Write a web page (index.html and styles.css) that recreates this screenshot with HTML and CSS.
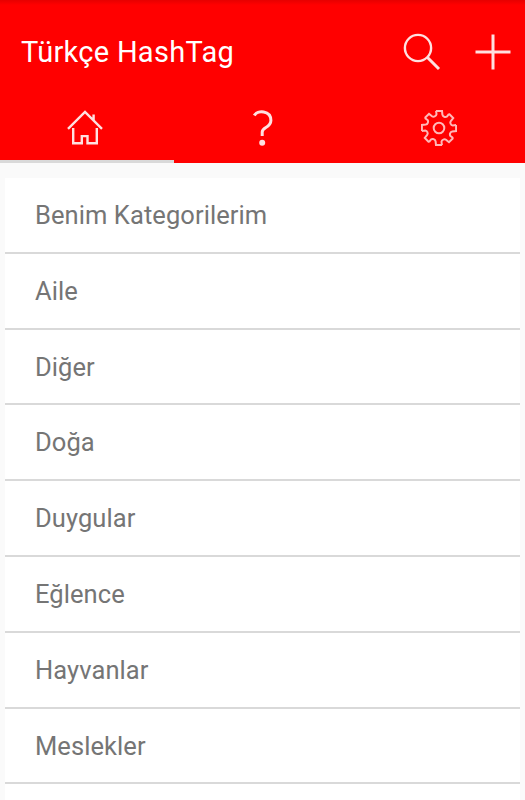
FILE: index.html
```html
<!DOCTYPE html>
<html lang="tr">
<head>
<meta charset="utf-8">
<title>Türkçe HashTag</title>
<link rel="stylesheet" href="styles.css">
</head>
<body>
<header class="header">
  <div class="toolbar">
    <h1 class="title">Türkçe HashTag</h1>
    <svg class="search" viewBox="0 0 38 38"><circle cx="15" cy="15" r="13.1"/><path d="M24.5 24.5L36 36"/></svg>
    <svg class="add" viewBox="0 0 36 36"><path d="M18 .5v35M.5 18h35"/></svg>
  </div>
  <nav class="tabs">
    <a class="tab active"><svg class="home" viewBox="0 0 36 36"><path d="M1 18.8L18 2l17 16.8M26.6 10V4.5M6.2 18v15.2h8.6v-7.1h5.7v7.1h9.3V18"/></svg></a>
    <a class="tab"><svg class="help" viewBox="0 0 36 36"><path d="M10.3 5.5C13-.2 27-.1 26.9 10.6 26.8 18 18.2 17 18.2 22v4"/><circle cx="18.2" cy="32.7" r="3"/></svg></a>
    <a class="tab"><svg class="settings" viewBox="-18 -18 36 36"><defs><path id="tooth" d="M-3-17.1H3l.4 3.8Q3.6-11.8 5.2-11.2 6.8-10.5 8-11.5L10-14.2"/></defs><use href="#tooth"/><use href="#tooth" transform="rotate(45)"/><use href="#tooth" transform="rotate(90)"/><use href="#tooth" transform="rotate(135)"/><use href="#tooth" transform="rotate(180)"/><use href="#tooth" transform="rotate(225)"/><use href="#tooth" transform="rotate(270)"/><use href="#tooth" transform="rotate(315)"/><circle r="5.3"/></svg></a>
  </nav>
</header>
<ul class="list">
  <li>Benim Kategorilerim</li>
  <li>Aile</li>
  <li>Diğer</li>
  <li>Doğa</li>
  <li>Duygular</li>
  <li>Eğlence</li>
  <li>Hayvanlar</li>
  <li>Meslekler</li>
</ul>
</body>
</html>
```
FILE: styles.css
```css
* { box-sizing: border-box; }
body {
  margin: 0;
  height: 800px;
  display: flex;
  flex-direction: column;
  background: #fafafa;
  font-family: Roboto, sans-serif;
}
.header {
  flex: none;
  height: 163px;
  background: linear-gradient(#e60000, #f00 5px);
}
.toolbar {
  display: flex;
  align-items: center;
  height: 93px;
  padding: 10px 14px 0 21px;
}
.title {
  flex: 1;
  margin: 0;
  color: #fff;
  font-size: 29px;
  font-weight: 400;
  line-height: 34px;
  letter-spacing: .28px;
}
svg {
  display: block;
  width: 36px;
  height: 36px;
  fill: none;
  stroke: #ffe0e0;
  stroke-width: 2.4;
}
.search { width: 38px; height: 38px; margin-right: 34px; }
.search path { stroke-width: 3; }
.add { stroke-width: 3; }
.tabs {
  display: grid;
  grid-template-columns: 174px 178px 173px;
  height: 70px;
}
.tab {
  display: flex;
  justify-content: center;
  padding-top: 17px;
  border-bottom: 3px solid transparent;
}
.active { border-color: #d9d9d9; }
.home { margin-left: -4px; }
.help { margin-left: -3px; stroke-width: 3; }
.help circle { fill: #ffe0e0; stroke: none; }
.settings { margin-left: 1px; stroke: #ffb8b8; stroke-width: 2; }
.list {
  flex: 1;
  margin: 15px 5px 0;
  padding: 0;
  list-style: none;
  background: #fff;
}
.list li {
  height: 75.8px;
  padding: 0 30px;
  border-bottom: 2px solid #d9d9d9;
  color: #757575;
  font-size: 25.5px;
  line-height: 75.4px;
  letter-spacing: .08px;
}
```
